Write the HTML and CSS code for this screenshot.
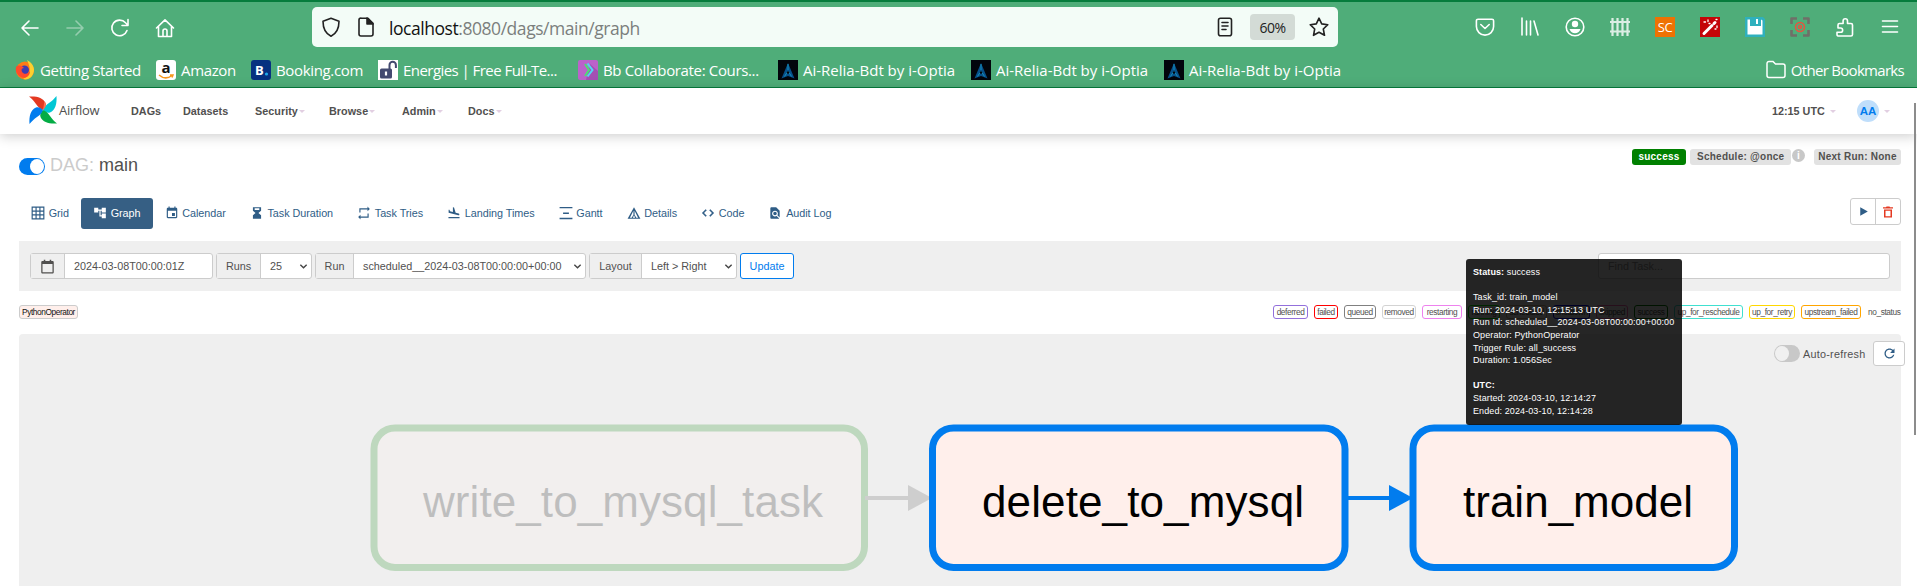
FILE: index.html
```html
<!DOCTYPE html>
<html lang="en">
<head>
<meta charset="utf-8">
<title>main - Graph - Airflow</title>
<link rel="stylesheet" href="styles.css">
</head>
<body>
<header class="chrome">
  <div class="toolbar">
    <div class="nav-buttons">
      <svg class="ico" viewBox="0 0 20 20"><path d="M18 10H2M9 3L2 10l7 7"/></svg>
      <svg class="ico faded" viewBox="0 0 20 20"><path d="M2 10h16M11 3l7 7-7 7"/></svg>
      <svg class="ico" viewBox="0 0 20 20"><path d="M17 12.500A7.800 7.800 0 1 1 15.500 4.800L18 7.300M18 1.500v6h-6"/></svg>
      <svg class="ico" viewBox="0 0 20 20"><path d="M1.500 10L10 1.800 18.500 10M3.500 8.500v10h13v-10M8 18v-5a2 2 0 0 1 4 0v5"/></svg>
    </div>
    <div class="urlbar">
      <svg class="ico dark" viewBox="0 0 20 20"><path d="M10 1.200l8 3c0 7-2 12-8 15-6-3-8-8-8-15z"/></svg>
      <svg class="ico dark" viewBox="0 0 20 20"><path d="M5 1.200h7l5 5V17a2 2 0 0 1-2 2H5a2 2 0 0 1-2-2V3a2 2 0 0 1 2-2z"/><path d="M11 1v6h6z" fill="#222"/></svg>
      <span class="url"><b>localhost</b>:8080/dags/main/graph</span>
      <svg class="ico dark reader" viewBox="0 0 20 20"><rect x="3.500" y="1.200" width="13" height="17.500" rx="2"/><path d="M7 5.500h6M7 9h6M7 12.500h4"/></svg>
      <span class="zoom">60%</span>
      <svg class="ico dark star" viewBox="0 0 20 20"><path d="M10 1.200l2.700 5.700 6.100.8-4.500 4.300 1.200 6.300L10 15.200l-5.500 3.100 1.200-6.300L1.200 7.700l6.100-.8z"/></svg>
    </div>
    <div class="extensions">
      <svg class="ico" viewBox="0 0 20 20"><path d="M3 2.200h14a1.600 1.600 0 0 1 1.600 1.600V9.500a8.600 8.600 0 0 1-17.200 0V3.800A1.600 1.600 0 0 1 3 2.200zM5.800 7.500L10 11.500l4.200-4"/></svg>
      <svg class="ico" viewBox="0 0 20 20"><path d="M2 1v17M6.500 4v14M10.500 4v14M14 4l4 14"/></svg>
      <svg class="ico" viewBox="0 0 20 20"><circle cx="10" cy="10" r="8.800"/><circle cx="10" cy="7" r="3.200" fill="#fff" stroke="none"/><path d="M4.500 12h11c-1 3-3 4.200-5.500 4.200S5.500 15 4.500 12z" fill="#fff" stroke="none"/></svg>
      <svg class="ico fence" viewBox="0 0 20 20"><path d="M2.500 1v18M7.500 1v18M12.500 1v18M17.500 1v18M0 5h20M0 14.500h20"/></svg>
      <span class="sc">SC</span>
      <svg class="ico" viewBox="0 0 20 20"><rect width="20" height="20" fill="#c40508" stroke="none"/><path d="M4 16.500L12 8.500" stroke-width="3"/><path d="M14 6.500l1-1" stroke-width="3"/><path d="M4 5h1.500M8 3v1.500M9 6.500h1M17 9v1.500M16 2.500h1M15 12h1" stroke-width="1.300"/></svg>
      <svg class="ico" viewBox="0 0 20 20"><path d="M0 0h18l2 2v18H0z" fill="#2fb0bd" stroke="none"/><path d="M2.500 2.500h2.500V9h11V2.500l1.500 1V17.500h-15z" fill="#fff" stroke="none"/><path d="M11 2h2v5h-2z" fill="#fff" stroke="none"/></svg>
      <svg class="ico focus" viewBox="0 0 20 20"><path d="M1.500 7V1.500H7M13 1.500h5.500V7M18.500 13v5.500H13M7 18.500H1.500V13"/><circle cx="10" cy="10" r="4.500"/><circle cx="10" cy="10" r="1.500"/></svg>
      <svg class="ico" viewBox="0 0 20 20"><path d="M3 19h13a1.500 1.500 0 0 0 1.500-1.500V8A1.500 1.500 0 0 0 16 6.500h-3.500V4a2.200 2.200 0 0 0-4.400 0v2.500H4.500A1.500 1.500 0 0 0 3 8v3h2.500a2 2 0 0 1 0 4.300H2V17.500A1.500 1.500 0 0 0 3 19z"/></svg>
      <svg class="ico" viewBox="0 0 20 20"><path d="M2.500 4h15M2.500 9.500h15M2.500 15h15"/></svg>
    </div>
  </div>
  <div class="bookmarks">
    <span class="bm bm1"><svg viewBox="0 0 20 20"><circle cx="10" cy="10.500" r="9" fill="#ff7b16"/><path d="M12 0c7 4 9 10 5 16-2 3-6 4-9 3 7-4 9-8 4-19z" fill="#ffcf2e"/><circle cx="9.500" cy="10" r="4.500" fill="#3f3bb0"/><path d="M1 7c3-3 6-1 8 1-3 0-3 3-1 5 3 2 6 0 7-2 0 6-5 8-9 6-4-2-6-6-5-10z" fill="#ff4b2b"/></svg>Getting Started</span>
    <span class="bm bm2"><svg viewBox="0 0 20 20"><rect width="20" height="20" rx="3" fill="#fff"/><text x="10" y="13" text-anchor="middle" class="amz">a</text><path d="M3 15c4 3.500 9 3.500 13 .5M14 15h3l-1 2.500" fill="none" stroke="#f7981d" stroke-width="1.500"/></svg>Amazon</span>
    <span class="bm bm3"><svg viewBox="0 0 20 20"><rect width="20" height="20" rx="3" fill="#063180"/><text x="4" y="15" class="bkg">B</text><circle cx="15.500" cy="14" r="1.600" fill="#1fa9e8"/></svg>Booking.com</span>
    <span class="bm bm4"><svg viewBox="0 0 20 20"><path d="M0 0h20v20H0z" fill="#fff"/><rect x="2" y="8.500" width="12" height="10" rx="1.500" fill="#434a70"/><path d="M11.500 9V5a3.200 3.200 0 0 1 6.400 0v3" fill="none" stroke="#434a70" stroke-width="2"/><path d="M8 11.500v4" stroke="#fff" stroke-width="2.200"/></svg>Energies | Free Full-Te...</span>
    <span class="bm bm5"><svg viewBox="0 0 20 20"><rect width="20" height="20" rx="2" fill="#bb62ca"/><path d="M12 4l8 7v9H8z" fill="#a44fb3"/><path d="M7 4l4 6-4 6" fill="none" stroke="#4be071" stroke-width="2"/><path d="M9.500 3.500l5 6.500-5 6.500" fill="none" stroke="#52d6f5" stroke-width="2"/></svg>Bb Collaborate: Cours...</span>
    <span class="bm bm6"><svg viewBox="0 0 20 20"><path d="M0 0h20v20H0z" fill="#02050c"/><path d="M10 3l6.500 15.500L10 16l-6.500 2.500z" fill="#07508a"/><path d="M10 4v6M6.500 16.500L10 11l3.500 5.500" fill="none" stroke="#1590bc"/><circle cx="10" cy="12.500" r="1.200" fill="#02050c"/></svg>Ai-Relia-Bdt by i-Optia</span>
    <span class="bm bm6"><svg viewBox="0 0 20 20"><path d="M0 0h20v20H0z" fill="#02050c"/><path d="M10 3l6.500 15.500L10 16l-6.500 2.500z" fill="#07508a"/><path d="M10 4v6M6.500 16.500L10 11l3.500 5.500" fill="none" stroke="#1590bc"/><circle cx="10" cy="12.500" r="1.200" fill="#02050c"/></svg>Ai-Relia-Bdt by i-Optia</span>
    <span class="bm bm6"><svg viewBox="0 0 20 20"><path d="M0 0h20v20H0z" fill="#02050c"/><path d="M10 3l6.500 15.500L10 16l-6.500 2.500z" fill="#07508a"/><path d="M10 4v6M6.500 16.500L10 11l3.500 5.500" fill="none" stroke="#1590bc"/><circle cx="10" cy="12.500" r="1.200" fill="#02050c"/></svg>Ai-Relia-Bdt by i-Optia</span>
    <span class="bm other"><svg viewBox="0 0 20 20"><path d="M1 15.500V3.500a2 2 0 0 1 2-2h4L9.500 4H17a2 2 0 0 1 2 2v9.500a2 2 0 0 1-2 2H3a2 2 0 0 1-2-2z" fill="none" stroke="#fff" stroke-width="1.500"/></svg>Other Bookmarks</span>
  </div>
</header>

<nav class="navbar">
  <svg class="pinwheel" viewBox="0 0 28 28">
    <path d="M0 .5C8 0 14 1.500 16.500 7c1 2.500-.5 5-2.500 7-3-1-5-3-7-6S3 3 0 .5z" fill="#e43921"/>
    <path d="M0 .5C8 0 14 1.500 16.500 7c1 2.500-.5 5-2.500 7-3-1-5-3-7-6S3 3 0 .5z" fill="#00c7d4" transform="rotate(90 14 14)"/>
    <path d="M0 .5C8 0 14 1.500 16.500 7c1 2.500-.5 5-2.500 7-3-1-5-3-7-6S3 3 0 .5z" fill="#04ac45" transform="rotate(180 14 14)"/>
    <path d="M0 .5C8 0 14 1.500 16.500 7c1 2.500-.5 5-2.500 7-3-1-5-3-7-6S3 3 0 .5z" fill="#017cee" transform="rotate(270 14 14)"/>
    <path d="M14 14c2-2 3.500-4.500 2.500-7l-1-2C15 8 14.500 11 14 14z" fill="#ff7557"/>
  </svg>
  <span class="brand">Airflow</span>
  <ul class="menu">
    <li class="m1">DAGs</li><li class="m2">Datasets</li><li class="m3">Security<i></i></li><li class="m4">Browse<i></i></li><li class="m5">Admin<i></i></li><li class="m6">Docs<i></i></li>
  </ul>
  <span class="clock">12:15 UTC<i></i></span>
  <span class="user"><span class="avatar">AA</span><i></i></span>
</nav>

<main>
  <div class="heading">
    <span class="switch on"></span>
    <h1><span>DAG:</span> main</h1>
    <div class="labels">
      <span class="label ok">success</span><span class="label sched">Schedule: @once</span><span class="info">i</span><span class="label next">Next Run: None</span>
    </div>
  </div>

  <div class="tabrow">
    <div class="tabs">
      <a class="tab"><svg viewBox="0 0 24 24"><path d="M2 2h20v20H2zM2 8.700h20M2 15.300h20M8.700 2v20M15.300 2v20" fill="none" stroke="currentColor" stroke-width="2"/></svg>Grid</a>
      <a class="tab active"><svg viewBox="0 0 24 24"><path d="M22 11V3h-7v3H9V3H2v8h7V8h2v10h4v3h7v-8h-7v3h-2V8h2v3z"/></svg>Graph</a>
      <a class="tab"><svg viewBox="0 0 24 24"><path d="M17 12h-5v5h5v-5zM16 1v2H8V1H6v2H5c-1.110 0-1.990.9-1.990 2L3 19c0 1.100.89 2 2 2h14c1.100 0 2-.9 2-2V5c0-1.100-.9-2-2-2h-1V1h-2zm3 18H5V8h14v11z"/></svg>Calendar</a>
      <a class="tab"><svg viewBox="0 0 24 24"><path d="M5 2v6l4.500 4L5 16v6h14v-6l-4.500-4L19 8V2zM8 4h8v3H8z"/></svg>Task Duration</a>
      <a class="tab"><svg viewBox="0 0 24 24"><path d="M6 6h12v3l4-4-4-4v3H4v7h2zM18 18H6v-3l-4 4 4 4v-3h14v-7h-2z"/></svg>Task Tries</a>
      <a class="tab"><svg viewBox="0 0 24 24"><path d="M2.500 19h19v2h-19v-2zm16.840-3.150c.8.210 1.620-.26 1.840-1.060.21-.8-.26-1.620-1.060-1.840l-5.310-1.420-2.760-9.020L10.120 2v8.280L5.150 8.950l-.93-2.320-1.450-.39v5.170l16.570 4.440z"/></svg>Landing Times</a>
      <a class="tab"><svg viewBox="0 0 24 24"><path d="M1 1.500h22v2.500H1zM7 11h10v2.500H7zM1 20h22v2.500H1z"/></svg>Gantt</a>
      <a class="tab"><svg viewBox="0 0 24 24"><path d="M12 2L1 22h22L12 2zM11 8v7l-3 5H5zM13 8l6 12h-3l-3-5zM12 16l2 4h-4z" fill-rule="evenodd"/></svg>Details</a>
      <a class="tab"><svg viewBox="0 0 24 24"><path d="M9.400 16.600L4.800 12l4.600-4.600L8 6l-6 6 6 6 1.400-1.400zm5.200 0l4.600-4.600-4.600-4.600L16 6l6 6-6 6-1.400-1.400z" stroke="currentColor" stroke-width=".8"/></svg>Code</a>
      <a class="tab"><svg viewBox="0 0 24 24"><path d="M20 19.590V8l-6-6H6c-1.100 0-1.990.9-1.990 2L4 20c0 1.100.89 2 1.990 2H18c.45 0 .85-.15 1.190-.4l-4.430-4.430c-.8.520-1.740.83-2.760.83-2.760 0-5-2.240-5-5s2.240-5 5-5 5 2.240 5 5c0 1.020-.31 1.960-.83 2.750L20 19.590zM9 13c0 1.660 1.340 3 3 3s3-1.340 3-3-1.340-3-3-3-3 1.340-3 3z"/></svg>Audit Log</a>
    </div>
    <div class="actions">
      <span><svg viewBox="0 0 24 24"><path d="M6 4v16l14-8z" fill="#2f5d86"/></svg></span>
      <span><svg viewBox="0 0 24 24"><path d="M2 2.500h6l1-1.500h6l1 1.500h6V5H2zM4 7h16v16H4zM7 9.500v11h10v-11z" fill="#e43921" fill-rule="evenodd"/></svg></span>
    </div>
  </div>

  <form class="filters">
    <div class="group g-date"><span class="addon"><svg viewBox="0 0 24 24"><path d="M20 3h-2V1h-2.500v2h-7V1H6v2H4c-1.100 0-2 .9-2 2v16c0 1.100.9 2 2 2h16c1.100 0 2-.9 2-2V5c0-1.100-.9-2-2-2zm0 18H4V8h16v13z"/></svg></span><span class="value">2024-03-08T00:00:01Z</span></div>
    <div class="group g-runs"><span class="addon">Runs</span><span class="value">25<svg class="chev" viewBox="0 0 10 10"><path d="M1.500 3L5 6.500 8.500 3"/></svg></span></div>
    <div class="group g-run"><span class="addon">Run</span><span class="value">scheduled__2024-03-08T00:00:00+00:00<svg class="chev" viewBox="0 0 10 10"><path d="M1.500 3L5 6.500 8.500 3"/></svg></span></div>
    <div class="group g-layout"><span class="addon">Layout</span><span class="value">Left &gt; Right<svg class="chev" viewBox="0 0 10 10"><path d="M1.500 3L5 6.500 8.500 3"/></svg></span></div>
    <span class="update">Update</span>
    <span class="find">Find Task...</span>
  </form>

  <div class="legend">
    <span class="chip operator">PythonOperator</span>
    <div class="states">
      <span class="chip deferred">deferred</span>
      <span class="chip failed">failed</span>
      <span class="chip queued">queued</span>
      <span class="chip removed">removed</span>
      <span class="chip restarting">restarting</span>
      <span class="chip running">running</span>
      <span class="chip scheduled">scheduled</span>
      <span class="chip shutdown">shutdown</span>
      <span class="chip skipped">skipped</span>
      <span class="chip success">success</span>
      <span class="chip resched">up_for_reschedule</span>
      <span class="chip retry">up_for_retry</span>
      <span class="chip upstream">upstream_failed</span>
      <span class="chip nostatus">no_status</span>
    </div>
  </div>

  <section class="graph">
    <svg class="dag" viewBox="19 334 1882 252">
      <g class="dim">
        <rect class="node ok-node" x="374" y="428" width="490.500" height="139.500" rx="21"/>
        <text x="423" y="516.500" textLength="400">write_to_mysql_task</text>
        <path class="edge" d="M865 498h44"/><path class="head" d="M908 485l24 13-24 13z"/>
      </g>
      <path class="edge sel" d="M1347 498h43"/><path class="head sel" d="M1389 485l24 13-24 13z"/>
      <rect class="node" x="932.500" y="428" width="412.500" height="139.500" rx="21"/>
      <text x="982" y="516.500" textLength="322">delete_to_mysql</text>
      <rect class="node" x="1413" y="428" width="321.500" height="139.500" rx="21"/>
      <text x="1463" y="516.500" textLength="230">train_model</text>
    </svg>
    <div class="refresh"><span class="switch"></span><span class="auto">Auto-refresh</span><span class="reload"><svg viewBox="0 0 24 24"><path d="M17.650 6.350C16.200 4.900 14.210 4 12 4c-4.420 0-7.990 3.580-7.990 8s3.570 8 7.990 8c3.730 0 6.840-2.550 7.730-6h-2.080c-.82 2.330-3.040 4-5.650 4-3.310 0-6-2.690-6-6s2.690-6 6-6c1.660 0 3.140.69 4.220 1.780L13 11h7V4l-2.350 2.350z"/></svg></span></div>
  </section>
</main>

<aside class="tooltip">
  <p><b>Status:</b> success</p>
  <p>&nbsp;</p>
  <p>Task_id: train_model</p>
  <p>Run: 2024-03-10, 12:15:13 UTC</p>
  <p>Run Id: scheduled__2024-03-08T00:00:00+00:00</p>
  <p>Operator: PythonOperator</p>
  <p>Trigger Rule: all_success</p>
  <p>Duration: 1.056Sec</p>
  <p>&nbsp;</p>
  <p><b>UTC:</b></p>
  <p>Started: 2024-03-10, 12:14:27</p>
  <p>Ended: 2024-03-10, 12:14:28</p>
</aside>
<div class="scrollbar"></div>
</body>
</html>
```

FILE: styles.css
```css
* { box-sizing: border-box; }
body { margin: 0; height: 586px; overflow: hidden; background: #fff; color: #51504f; font: 10.8px/14px "Liberation Sans", Arial, sans-serif; position: relative; }

/* browser chrome */
.chrome { height: 88px; background: #4fad79; border-top: 2px solid #067c3c; border-bottom: 1px solid #067c3c; font-family: "Open Sans", "Noto Sans", sans-serif; color: #fff; }
.toolbar { display: flex; height: 52px; padding-top: 5px; }
.ico { width: 20px; height: 20px; flex: none; fill: none; stroke: #fff; stroke-width: 1.6; stroke-linecap: round; stroke-linejoin: round; }
.nav-buttons { width: 312px; display: flex; gap: 25px; padding: 11px 0 0 20px; }
.faded { opacity: .4; }
.urlbar { width: 1026px; height: 40px; border-radius: 5px; background: #f3fcf7; display: flex; align-items: center; padding: 0 9px 0 9px; }
.dark { stroke: #222; }
.urlbar .dark + .dark { margin-left: 15px; }
.url { margin-left: 13px; padding-top: 2px; font-size: 17.5px; line-height: 24px; letter-spacing: -.45px; color: #7b7f7d; flex: 1; white-space: nowrap; }
.url b { font-weight: 400; color: #111; }
.zoom { margin: 0 14px 0 15px; width: 45px; height: 26px; border-radius: 4px; background: #d3dbd6; color: #222; font-size: 14px; letter-spacing: -.5px; line-height: 28px; text-align: center; }
.extensions { flex: 1; display: flex; justify-content: space-between; padding: 10px 17px 0 0; margin-left: 137px; }
.fence { stroke-width: 2.200; opacity: .8; stroke-linecap: butt; }
.sc { width: 20px; height: 20px; background: #ee7203; font-size: 13px; line-height: 20px; text-align: center; letter-spacing: -.3px; }
.focus { stroke: #706f68; stroke-width: 2.600; stroke-linecap: butt; }
.focus circle { stroke: #e8533f; stroke-width: 1.500; }
.bookmarks { display: flex; height: 33px; padding: 6px 13px 0 15px; }
.bm { display: flex; align-items: center; flex: none; height: 20px; font-size: 15px; line-height: 20px; white-space: nowrap; letter-spacing: -.35px; }
.bm svg { width: 20px; height: 20px; flex: none; margin-right: 5px; letter-spacing: 0; overflow: visible; }
.bm1 { width: 141px; }
.bm2 { width: 95px; }
.bm3 { width: 127px; }
.bm4 { width: 200px; letter-spacing: -.55px; }
.bm5 { width: 200px; }
.bm6 { width: 193px; letter-spacing: 0; }
.other { margin-left: auto; letter-spacing: -.7px; }
.amz { font: bold 15px "Open Sans", sans-serif; fill: #111; }
.bkg { font: bold 13px "Open Sans", sans-serif; fill: #fff; }

/* airflow navigation */
.navbar { height: 46px; background: #fff; display: flex; align-items: center; padding-left: 29px; box-shadow: 0 2px 12px rgba(0,0,0,.2); position: relative; font-weight: bold; }
.pinwheel { width: 28px; height: 28px; margin-bottom: 3px; }
.brand { margin: 0 0 3px 2px; width: 72px; font: 13px/16px "Open Sans", sans-serif; letter-spacing: -.3px; }
.menu { list-style: none; display: flex; margin: 0; padding: 0; flex: 1; letter-spacing: .03px; }
.menu li { white-space: nowrap; }
.m1 { width: 52px; } .m2 { width: 72px; } .m3 { width: 74px; } .m4 { width: 73px; } .m5 { width: 66px; }
.navbar i { display: inline-block; border: 3px solid transparent; border-top-color: #e2cfe2; border-bottom: 0; margin: 0 0 2px 1px; }
.clock { width: 85px; white-space: nowrap; }
.clock i { margin-left: 5px; }
.user { width: 60px; display: flex; align-items: center; }
.avatar { width: 22px; height: 22px; border-radius: 50%; background: #bfdefb; color: #017cee; line-height: 23px; text-align: center; font-size: 11.500px; }
.user i { margin: 0 0 0 5px; }

main { padding: 0 16px 0 19px; }
.heading { height: 64px; display: flex; }
.switch { width: 26px; height: 17px; border-radius: 9px; background: #c8c8c8; padding: 1px; flex: none; }
.switch::before { content: ""; display: block; width: 14px; height: 15px; border-radius: 50%; background: #f0f0f0; }
.switch.on { background: #017cee; margin-top: 24px; }
.switch.on::before { background: #fff; margin-left: 10px; }
h1 { margin: 20px 0 0 5px; font-size: 18px; line-height: 22px; font-weight: 400; }
h1 span { color: #cbcbcb; }
.labels { margin: 15px 0 0 auto; display: flex; }
.label { height: 16px; border-radius: 3px; background: #e2e2e2; font-size: 10px; line-height: 16px; font-weight: bold; letter-spacing: .25px; text-align: center; white-space: nowrap; }
.ok { width: 54px; background: #008000; color: #fff; margin-right: 4px; }
.sched { width: 101px; text-align: left; padding-left: 7px; }
.info { width: 13px; height: 13px; border-radius: 50%; background: #c8c8c8; color: #fff; font-size: 10px; line-height: 13px; text-align: center; font-weight: bold; margin: 0 9px 0 1px; }
.next { width: 87px; }

.tabrow { display: flex; justify-content: space-between; height: 43px; }
.tabs { display: flex; height: 31px; }
.tab { display: flex; align-items: center; padding: 0 12px 1px; color: #2f5d86; border-radius: 3px; white-space: nowrap; letter-spacing: -.03px; }
.tab svg { width: 14px; height: 14px; margin-right: 3.700px; fill: currentColor; }
.tab.active { background: #365f84; color: #fff; }
.actions { display: flex; height: 27px; border: 1px solid #ccc; border-radius: 3px; width: 51px; }
.actions span { flex: 1; display: flex; align-items: center; justify-content: center; }
.actions span + span { border-left: 1px solid #ccc; }
.actions svg { width: 13px; height: 13px; }
.actions span + span svg { width: 12px; height: 12px; }

.filters { height: 50px; background: #efefef; display: flex; padding: 12px 11px; gap: 3px; }
.group { height: 26px; border: 1px solid #ccc; border-radius: 3px; display: flex; background: #fff; line-height: 25px; white-space: nowrap; }
.addon { background: #efefef; border-right: 1px solid #ccc; display: flex; align-items: center; justify-content: center; }
.addon svg { width: 15px; height: 15px; fill: #51504f; }
.value { flex: 1; display: flex; align-items: center; padding-left: 9px; }
.g-date { width: 183px; } .g-date .addon { width: 34px; }
.g-runs { width: 96px; } .g-runs .addon { width: 44px; }
.g-run { width: 271px; } .g-run .addon { width: 38px; }
.g-layout { width: 148px; } .g-layout .addon { width: 52px; }
.chev { width: 9px; height: 9px; margin-left: auto; margin-right: 3px; fill: none; stroke: #444; stroke-width: 1.500; }
.update { width: 54px; border: 1px solid #017cee; border-radius: 3px; color: #017cee; background: #fff; text-align: center; line-height: 25px; }
.find { width: 292px; margin-left: auto; border: 1px solid #ccc; border-radius: 3px; background: #fff; color: #999; line-height: 25px; padding-left: 9px; }

.legend { height: 43px; display: flex; justify-content: space-between; padding-top: 14px; color: #51504f; }
.states { display: flex; gap: 6px; }
.chip { flex: none; height: 14px; border: 1px solid #ccc; border-radius: 3px; font-size: 8.300px; letter-spacing: -.4px; line-height: 12px; text-align: center; white-space: nowrap; }
.operator { width: 59px; background: #ffefeb; color: #111; }
.deferred { width: 35px; border-color: mediumpurple; }
.failed { width: 24px; border-color: red; }
.queued { width: 32px; border-color: gray; }
.removed { width: 34px; border-color: lightgrey; }
.restarting { width: 40px; border-color: violet; }
.running { width: 32px; border-color: lime; }
.scheduled { width: 41px; border-color: tan; }
.shutdown { width: 37px; border-color: blue; }
.skipped { width: 32px; border-color: hotpink; }
.success { width: 34px; border-color: green; }
.resched { width: 69px; border-color: turquoise; }
.retry { width: 46px; border-color: gold; }
.upstream { width: 60px; border-color: orange; }
.nostatus { width: 34px; border-color: transparent; }

.graph { height: 252px; background: #efefef; border-radius: 4px 4px 0 0; position: relative; }
.dag { display: block; width: 1882px; height: 252px; font-size: 44px; }
.node { fill: #ffefeb; stroke: #017cee; stroke-width: 7; }
.ok-node { stroke: #008000; }
.edge { stroke-width: 4; }
.edge.sel { stroke: #017cee; }
.head.sel { fill: #017cee; }
.dim { opacity: .2; }
.dim .edge { stroke: #505050; }
.dim .head { fill: #505050; }
.refresh { position: absolute; top: 7px; right: -4px; display: flex; align-items: center; height: 25px; }
.auto { margin: 0 8px 0 3px; width: 62px; letter-spacing: .25px; white-space: nowrap; }
.reload { width: 32px; height: 25px; border: 1px solid #ccc; border-radius: 3px; background: #fff; display: flex; align-items: center; justify-content: center; }
.reload svg { width: 15px; height: 15px; fill: #2f5d86; }

.tooltip { position: absolute; left: 1466px; top: 259px; width: 216px; height: 166px; border-radius: 3px; background: rgba(0,0,0,.85); color: #fff; padding: 7px 7px; font-size: 9px; letter-spacing: .1px; line-height: 12.600px; white-space: nowrap; }
.tooltip p { margin: 0; }
.scrollbar { position: absolute; left: 1914px; top: 103px; width: 2px; height: 332px; background: #8c8c8c; }
```
